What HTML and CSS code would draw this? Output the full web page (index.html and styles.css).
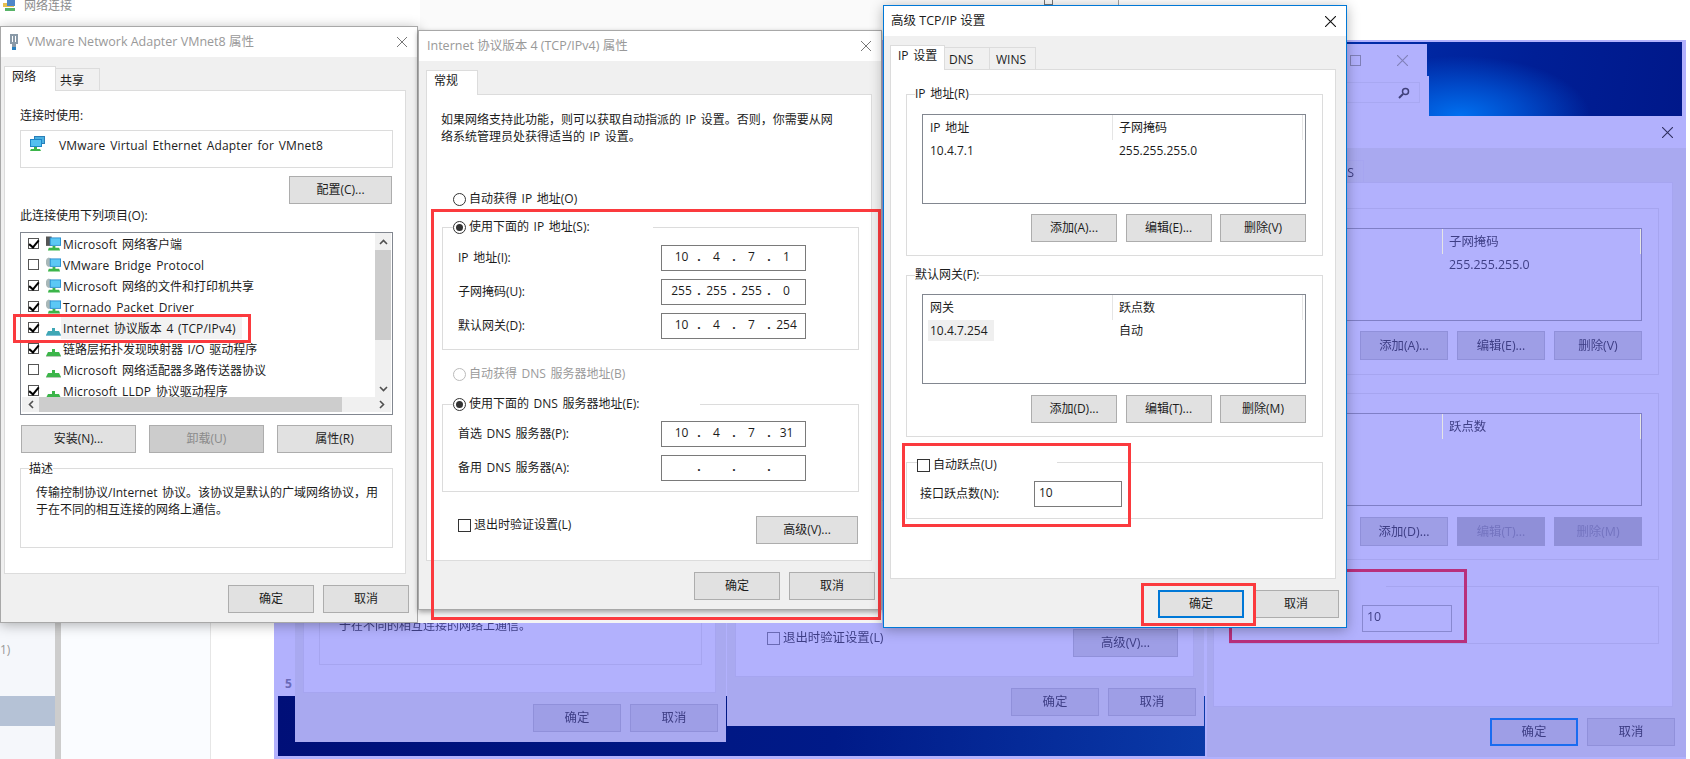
FILE: index.html
```html
<!DOCTYPE html>
<html>
    <head>
        <meta charset="utf-8">
        <title>网络连接</title>
        <link rel="stylesheet" href="styles.css">
    </head>
    <body>
        <svg class="defs" width="0" height="0">
            <symbol id="net-base" viewBox="0 0 15 16">
                <path d="M6 8h3v3h4l2 4H0l2-4h4z" fill="#3cb54a"/>
                <path d="M0 15h15v1H0z" fill="#b9c9b9"/>
            </symbol>
            <symbol id="net-proto" viewBox="0 0 15 16">
                <path d="M6 8h3v3h4l2 4H0l2-4h4z" fill="#3fa7b5"/>
                <path d="M0 15h15v1H0z" fill="#7fc0d8"/>
            </symbol>
            <symbol id="net-client" viewBox="0 0 16 16">
                <path d="M0 0h6v10H0z" fill="#555"/>
                <path d="M4 1h12v9H4z" fill="#2b8fd0"/>
                <path d="M5 2h10v7H5z" fill="#5cc8f5"/>
                <path d="M7 10h3v2h4l1 3H2l1-3h4z" fill="#3cb54a"/>
            </symbol>
            <symbol id="net-service" viewBox="0 0 16 16">
                <path d="M1 1l2-1 2 1 1 2v4l-1 2-2 1-2-1-1-2V3z" fill="#a9b8b8"/>
                <path d="M4 1h12v9H4z" fill="#2b8fd0"/>
                <path d="M5 2h10v7H5z" fill="#5cc8f5"/>
                <path d="M7 10h3v2h4l1 3H2l1-3h4z" fill="#3cb54a"/>
            </symbol>
            <symbol id="adapter" viewBox="0 0 16 16">
                <path d="M5 0h11v8H5z" fill="#2b7fb8"/>
                <path d="M6 1h9v6H6z" fill="#4bb0e0"/>
                <path d="M1 3h12v8H1z" fill="#1f86c8"/>
                <path d="M2 4h10v6H2z" fill="#53c0f0"/>
                <path d="M5 11h3v2h3l1 2H1l1-2h3z" fill="#3cb54a"/>
            </symbol>
            <symbol id="close" viewBox="0 0 10 10">
                <path d="M0 0l10 10M10 0L0 10" fill="none" stroke="currentColor" stroke-width="1"/>
            </symbol>
            <symbol id="chev-up" viewBox="0 0 9 6">
                <path d="M1 5l3.500-3.500L8 5" fill="none" stroke="#505050" stroke-width="1.600"/>
            </symbol>
            <symbol id="chev-down" viewBox="0 0 9 6">
                <path d="M1 1l3.500 3.500L8 1" fill="none" stroke="#505050" stroke-width="1.600"/>
            </symbol>
            <symbol id="chev-left" viewBox="0 0 6 9">
                <path d="M5 1L1.500 4.500 5 8" fill="none" stroke="#505050" stroke-width="1.600"/>
            </symbol>
            <symbol id="chev-right" viewBox="0 0 6 9">
                <path d="M1 1l3.500 3.500L1 8" fill="none" stroke="#505050" stroke-width="1.600"/>
            </symbol>
        </svg>

        <div class="desktop">
            <!-- explorer window behind everything -->
            <div class="explorer">
                <div class="explorer-head">
                    <svg class="explorer-icon" viewBox="0 0 14 12">
                        <path d="M0 3h4l1-2h6v6H0z" fill="#e8c050"/>
                        <path d="M4 0h8v6H4z" fill="#4f86c8"/>
                        <path d="M2 8h10v3H2z" fill="#58b368"/>
                    </svg>
                    <span>网络连接</span>
                </div>
                <div class="explorer-body">
                    <div class="explorer-nav">
                        <div class="nav-count">1)</div>
                        <div class="nav-selected"></div>
                    </div>
                    <div class="explorer-split"></div>
                    <div class="explorer-pane"></div>
                </div>
            </div>
            <div class="backwin"><span class="backwin-box"></span></div>

            <!-- washed out copy of the desktop -->
            <div class="overlay"></div>
            <div class="wall-low"></div>
            <div class="wall-high"></div>
            <div class="mini">
                <div class="mini-head">
                    <span class="mini-square"></span>
                    <svg class="mini-close"><use href="#close"/></svg>
                </div>
                <div class="mini-search">
                    <div class="mini-box">
                        <svg class="mini-glass" viewBox="0 0 12 12">
                            <circle cx="7.500" cy="4.500" r="3" fill="none" stroke="#40407a" stroke-width="1.500"/>
                            <path d="M5 7l-4 4" stroke="#40407a" stroke-width="2"/>
                        </svg>
                    </div>
                </div>
            </div>
            <span class="ghost-five">5</span>

            <div class="window ghost ghost-two">
                <div class="panel ghost-two-panel">
                    <div class="verify-row">
                        <label class="choice"><span class="check big"></span>退出时验证设置(L)</label>
                        <button class="btn btn-advanced">高级(V)...</button>
                    </div>
                </div>
                <div class="footer">
                    <button class="btn btn-ghost">确定</button>
                    <button class="btn btn-ghost">取消</button>
                </div>
            </div>

            <div class="window ghost ghost-one">
                <div class="panel ghost-one-panel">
                    <div class="ghost-desc">于在不同的相互连接的网络上通信。</div>
                </div>
                <div class="footer">
                    <button class="btn btn-ghost">确定</button>
                    <button class="btn btn-ghost">取消</button>
                </div>
            </div>

            <div class="window ghost ghost-three">
                <div class="titlebar">
                    <svg class="close"><use href="#close"/></svg>
                </div>
                <div class="tabs">
                    <span class="tab active tab-g-ip">IP 设置</span>
                    <span class="tab tab-g-dns">DNS</span>
                    <span class="tab tab-g-wins">WINS</span>
                </div>
                <div class="panel ghost-three-panel">
                    <fieldset class="group g-first">
                        <legend>IP 地址(R)</legend>
                        <div class="table">
                            <div class="table-head"><span class="cell-a">IP 地址</span><span class="cell-b">子网掩码</span></div>
                            <div class="table-row"><span class="cell-a">10.4.7.1</span><span class="cell-b">255.255.255.0</span></div>
                        </div>
                        <div class="table-actions">
                            <button class="btn btn-ghost tall">添加(A)...</button>
                            <button class="btn btn-ghost tall">编辑(E)...</button>
                            <button class="btn btn-ghost tall">删除(V)</button>
                        </div>
                    </fieldset>
                    <fieldset class="group g-second">
                        <legend>默认网关(F):</legend>
                        <div class="table">
                            <div class="table-head"><span class="cell-a">网关</span><span class="cell-b">跃点数</span></div>
                        </div>
                        <div class="table-actions">
                            <button class="btn btn-ghost tall">添加(D)...</button>
                            <button class="btn btn-ghost tall off">编辑(T)...</button>
                            <button class="btn btn-ghost tall off">删除(M)</button>
                        </div>
                    </fieldset>
                    <fieldset class="group g-third">
                        <legend></legend>
                        <div class="text-field">10</div>
                    </fieldset>
                </div>
                <div class="footer">
                    <button class="btn btn-ghost btn-default">确定</button>
                    <button class="btn btn-ghost">取消</button>
                </div>
            </div>
            <div class="mark mark-ghost"></div>

            <!-- adapter properties -->
            <div class="window dialog adapter-dialog">
                <div class="titlebar faded">
                    <svg class="plug" viewBox="0 0 10 16">
                        <path d="M1 0h8v10H7v3H3v-3H1z" fill="#8a9aa8"/>
                        <path d="M3 2h1v6H3zM6 2h1v6H6z" fill="#fff"/>
                        <path d="M3 13h4v3H3z" fill="#2a80c0"/>
                    </svg>
                    <span>VMware Network Adapter VMnet8 属性</span>
                    <svg class="close"><use href="#close"/></svg>
                </div>
                <div class="tabs">
                    <span class="tab active tab-net">网络</span>
                    <span class="tab tab-share">共享</span>
                </div>
                <div class="panel adapter-panel">
                    <div class="text-line">连接时使用:</div>
                    <div class="adapter-box">
                        <svg class="adapter-icon"><use href="#adapter"/></svg>
                        <span class="en">VMware Virtual Ethernet Adapter for VMnet8</span>
                    </div>
                    <button class="btn btn-config">配置(C)...</button>
                    <div class="text-line items-label">此连接使用下列项目(O):</div>
                    <div class="listbox">
                        <div class="rows">
                            <div class="row"><span class="check on"></span><svg class="row-icon"><use href="#net-client"/></svg><span class="row-text"><span class="en">Microsoft</span> 网络客户端</span></div>
                            <div class="row"><span class="check"></span><svg class="row-icon"><use href="#net-service"/></svg><span class="row-text"><span class="en">VMware Bridge Protocol</span></span></div>
                            <div class="row"><span class="check on"></span><svg class="row-icon"><use href="#net-service"/></svg><span class="row-text"><span class="en">Microsoft</span> 网络的文件和打印机共享</span></div>
                            <div class="row"><span class="check on"></span><svg class="row-icon"><use href="#net-service"/></svg><span class="row-text"><span class="en">Tornado Packet Driver</span></span></div>
                            <div class="row"><span class="check on"></span><svg class="row-icon"><use href="#net-proto"/></svg><span class="row-text selected"><span class="en">Internet</span> 协议版本 4 <span class="en">(TCP/IPv4)</span></span></div>
                            <div class="row"><span class="check on"></span><svg class="row-icon"><use href="#net-base"/></svg><span class="row-text">链路层拓扑发现映射器 I/O 驱动程序</span></div>
                            <div class="row"><span class="check"></span><svg class="row-icon"><use href="#net-base"/></svg><span class="row-text"><span class="en">Microsoft</span> 网络适配器多路传送器协议</span></div>
                            <div class="row"><span class="check on"></span><svg class="row-icon"><use href="#net-base"/></svg><span class="row-text"><span class="en">Microsoft LLDP</span> 协议驱动程序</span></div>
                        </div>
                        <div class="vbar">
                            <svg class="arrow-v"><use href="#chev-up"/></svg>
                            <div class="vthumb"></div>
                            <svg class="arrow-v arrow-end"><use href="#chev-down"/></svg>
                        </div>
                        <div class="hbar">
                            <svg class="arrow-h"><use href="#chev-left"/></svg>
                            <div class="hthumb"></div>
                            <svg class="arrow-h arrow-end"><use href="#chev-right"/></svg>
                        </div>
                    </div>
                    <div class="item-actions">
                        <button class="btn btn-wide">安装(N)...</button>
                        <button class="btn btn-wide disabled">卸载(U)</button>
                        <button class="btn btn-wide">属性(R)</button>
                    </div>
                    <fieldset class="group desc-group">
                        <legend>描述</legend>
                        <p class="desc-text">传输控制协议/Internet 协议。该协议是默认的广域网络协议，用<br>于在不同的相互连接的网络上通信。</p>
                    </fieldset>
                </div>
                <div class="footer">
                    <button class="btn">确定</button>
                    <button class="btn">取消</button>
                </div>
            </div>

            <!-- ipv4 properties -->
            <div class="window dialog ipv4-dialog">
                <div class="titlebar faded">
                    <span>Internet 协议版本 4 (TCP/IPv4) 属性</span>
                    <svg class="close"><use href="#close"/></svg>
                </div>
                <div class="tabs">
                    <span class="tab active tab-general">常规</span>
                </div>
                <div class="panel ipv4-panel">
                    <p class="intro">如果网络支持此功能，则可以获取自动指派的 IP 设置。否则，你需要从网<br>络系统管理员处获得适当的 IP 设置。</p>
                    <label class="choice radio-line"><span class="radio"></span>自动获得 IP 地址(O)</label>
                    <fieldset class="group ip-group">
                        <legend class="legend-ip"><span class="radio on"></span>使用下面的 IP 地址(S):</legend>
                        <div class="form-grid">
                            <span>IP 地址(I):</span>
                            <div class="ip-field"><i>10</i><b>.</b><i>4</i><b>.</b><i>7</i><b>.</b><i>1</i></div>
                            <span>子网掩码(U):</span>
                            <div class="ip-field"><i>255</i><b>.</b><i>255</i><b>.</b><i>255</i><b>.</b><i>0</i></div>
                            <span>默认网关(D):</span>
                            <div class="ip-field"><i>10</i><b>.</b><i>4</i><b>.</b><i>7</i><b>.</b><i>254</i></div>
                        </div>
                    </fieldset>
                    <label class="choice radio-line radio-off"><span class="radio"></span>自动获得 DNS 服务器地址(B)</label>
                    <fieldset class="group ip-group dns-group">
                        <legend class="legend-dns"><span class="radio on"></span>使用下面的 DNS 服务器地址(E):</legend>
                        <div class="form-grid">
                            <span>首选 DNS 服务器(P):</span>
                            <div class="ip-field"><i>10</i><b>.</b><i>4</i><b>.</b><i>7</i><b>.</b><i>31</i></div>
                            <span>备用 DNS 服务器(A):</span>
                            <div class="ip-field"><i></i><b>.</b><i></i><b>.</b><i></i><b>.</b><i></i></div>
                        </div>
                    </fieldset>
                    <div class="verify-row main-verify">
                        <label class="choice"><span class="check big"></span>退出时验证设置(L)</label>
                        <button class="btn btn-advanced-main">高级(V)...</button>
                    </div>
                </div>
                <div class="footer">
                    <button class="btn">确定</button>
                    <button class="btn">取消</button>
                </div>
            </div>
            <div class="mark mark-ipv4"></div>

            <!-- advanced settings -->
            <div class="window dialog advanced-dialog">
                <div class="titlebar dark">
                    <span>高级 TCP/IP 设置</span>
                    <svg class="close"><use href="#close"/></svg>
                </div>
                <div class="tabs">
                    <span class="tab active tab-ip">IP 设置</span>
                    <span class="tab tab-dns">DNS</span>
                    <span class="tab tab-wins">WINS</span>
                </div>
                <div class="panel advanced-panel">
                    <fieldset class="group a-group">
                        <legend>IP 地址(R)</legend>
                        <div class="table">
                            <div class="table-head"><span class="cell-a">IP 地址</span><span class="cell-b">子网掩码</span></div>
                            <div class="table-row"><span class="cell-a">10.4.7.1</span><span class="cell-b">255.255.255.0</span></div>
                        </div>
                        <div class="table-actions">
                            <button class="btn">添加(A)...</button>
                            <button class="btn">编辑(E)...</button>
                            <button class="btn">删除(V)</button>
                        </div>
                    </fieldset>
                    <fieldset class="group a-group a-second">
                        <legend>默认网关(F):</legend>
                        <div class="table">
                            <div class="table-head"><span class="cell-a">网关</span><span class="cell-b">跃点数</span></div>
                            <div class="table-row"><span class="cell-a"><span class="row-picked">10.4.7.254</span></span><span class="cell-b">自动</span></div>
                        </div>
                        <div class="table-actions">
                            <button class="btn">添加(D)...</button>
                            <button class="btn">编辑(T)...</button>
                            <button class="btn">删除(M)</button>
                        </div>
                    </fieldset>
                    <fieldset class="group metric-group">
                        <legend class="legend-metric"><span class="check big"></span>自动跃点(U)</legend>
                        <div class="metric-row">
                            <span>接口跃点数(N):</span>
                            <div class="text-field metric-field">10</div>
                        </div>
                    </fieldset>
                </div>
                <div class="footer">
                    <button class="btn btn-default">确定</button>
                    <button class="btn">取消</button>
                </div>
            </div>
            <div class="mark mark-adapter"></div>
            <div class="mark mark-metric"></div>
            <div class="mark mark-ok"></div>
        </div>
    </body>
</html>
```

FILE: styles.css
```css
* {
    box-sizing: border-box;
}
body {
    margin: 0;
    background-color: white;
}
.defs {
    display: block;
    height: 0;
}
.desktop {
    position: relative;
    width: 1690px;
    height: 759px;
    overflow: hidden;
    font-family: "Open Sans", "Noto Sans CJK SC", sans-serif;
    font-size: 12px;
    line-height: 16px;
    word-spacing: 1.500px;
    color: #1c1c1c;
}
.en {
    letter-spacing: 0.150px;
}

/* explorer behind the dialogs */
.explorer {
    position: absolute;
    left: 0;
    top: 0;
    width: 274px;
    height: 759px;
    display: flex;
    flex-direction: column;
}
.explorer-head {
    height: 26px;
    display: flex;
    gap: 7px;
    padding-left: 3px;
    line-height: 12px;
    color: #8c8c8c;
}
.explorer-icon {
    width: 14px;
    height: 12px;
}
.explorer-body {
    flex: 1;
    display: flex;
}
.explorer-nav {
    width: 55px;
    background-color: #f5f7fb;
    display: flex;
    flex-direction: column;
    justify-content: flex-end;
    padding-bottom: 33px;
}
.nav-count {
    margin-bottom: 38px;
    color: #999;
}
.nav-selected {
    height: 30px;
    background-color: #b5c2d6;
}
.explorer-split {
    width: 6px;
    background-color: #cdcdcd;
}
.explorer-pane {
    width: 150px;
    background-color: #fafcff;
    border-right: 1px solid #e6e6e6;
}
.backwin {
    position: absolute;
    left: 420px;
    top: 0;
    width: 699px;
    height: 30px;
    background-color: #fafafa;
    border-right: 1px solid #a0a0a0;
    display: flex;
    justify-content: flex-end;
    padding-right: 65px;
}
.backwin-box {
    width: 9px;
    height: 5px;
    border: 1px solid #777;
    border-top: none;
}

/* blue washed layer */
.overlay {
    position: absolute;
    left: 274px;
    top: 40px;
    width: 1412px;
    height: 719px;
    background-color: #b2b1fd;
}
.wall-low {
    position: absolute;
    left: 278px;
    top: 696px;
    width: 927px;
    height: 60px;
    background: linear-gradient(95deg, #000f78 0%, #001a88 60%, #0a3aa8 100%);
}
.wall-high {
    position: absolute;
    left: 1300px;
    top: 42px;
    width: 382px;
    height: 74px;
    background:
        radial-gradient(ellipse 130px 60px at 160px 74px, #0070f0 0%, rgba(0, 90, 220, 0.7) 50%, rgba(0, 40, 160, 0) 100%),
        linear-gradient(100deg, #0030b0 0%, #001f96 60%, #00188a 100%);
}
.mini {
    position: absolute;
    left: 1300px;
    top: 44px;
}
.mini-head {
    width: 127px;
    height: 32px;
    background-color: #b2b1fd;
    display: flex;
    align-items: center;
    padding-left: 50px;
}
.mini-square {
    width: 11px;
    height: 11px;
    border: 1px solid #8080b8;
}
.mini-close {
    width: 11px;
    height: 11px;
    margin-left: 36px;
    color: #8080b8;
}
.mini-search {
    width: 129px;
    height: 40px;
    background-color: #b2b1fd;
    padding: 6px 9px 13px 0;
}
.mini-box {
    height: 21px;
    border: 1px solid #a8a8f2;
    border-left: none;
    display: flex;
    justify-content: flex-end;
    align-items: center;
    padding-right: 9px;
}
.mini-glass {
    width: 12px;
    height: 12px;
}
.ghost-five {
    position: absolute;
    left: 285px;
    top: 676px;
    color: #6a6ab8;
    font-weight: 700;
}

/* shared window parts */
.window {
    position: absolute;
    isolation: isolate;
    display: flex;
    flex-direction: column;
    --body: #f0f0f0;
    --paper: #fff;
    --line: #dcdcdc;
    --btn: #e1e1e1;
    --btn-line: #adadad;
    --list-line: #828790;
    --field-line: #7a7a7a;
    background-color: var(--body);
}
.dialog {
    border: 1px solid #a8a8a8;
    box-shadow: 0 2px 12px rgba(0, 0, 0, 0.3);
}
.titlebar {
    height: 30px;
    background-color: var(--paper);
    display: flex;
    align-items: center;
    padding: 0 10px 0 8px;
    font-size: 12.500px;
    word-spacing: 0;
    flex: none;
}
.faded {
    color: #999;
}
.dark {
    padding-left: 7px;
}
.plug {
    width: 10px;
    height: 16px;
    margin-right: 8px;
}
.close {
    width: 10px;
    height: 10px;
    margin-left: auto;
    color: #777;
}
.dark .close {
    color: #111;
    width: 11px;
    height: 11px;
}
.tabs {
    display: flex;
    align-items: flex-end;
    margin-top: 9px;
    margin-bottom: -1px;
    position: relative;
    z-index: 1;
    flex: none;
}
.tab {
    height: 23px;
    border: 1px solid var(--line);
    border-left: none;
    line-height: 23px;
}
.tab.active {
    height: 25px;
    background-color: var(--paper);
    border-bottom: none;
    border-left: 1px solid var(--line);
    line-height: 20px;
}
.panel {
    background-color: var(--paper);
    border: 1px solid var(--line);
    flex: none;
}
.footer {
    display: flex;
    justify-content: flex-end;
    gap: 9px;
    padding: 11px 7px 0 0;
    flex: none;
}
.btn {
    width: 86px;
    height: 28px;
    padding: 0;
    font: inherit;
    color: inherit;
    word-spacing: inherit;
    background-color: var(--btn);
    border: 1px solid var(--btn-line);
}
.btn-default {
    border: 2px solid #0078d7;
}
.disabled {
    background-color: #ccc;
    color: #8a8a8a;
}
.group {
    margin: 0;
    min-width: 0;
    border: 1px solid var(--line);
}
.group legend {
    padding: 0;
}
.choice {
    display: flex;
    align-items: center;
    gap: 3px;
    height: 18px;
}
.radio {
    width: 13px;
    height: 13px;
    border: 1px solid #333;
    border-radius: 50%;
    background-color: var(--paper);
    display: grid;
    place-items: center;
    flex: none;
}
.radio.on::after {
    content: "";
    width: 7px;
    height: 7px;
    border-radius: 50%;
    background-color: #333;
}
.check {
    width: 11px;
    height: 11px;
    border: 1px solid #555;
    background-color: var(--paper);
    display: grid;
    place-items: center;
    flex: none;
}
.check.big {
    width: 13px;
    height: 13px;
    border-color: #333;
}
.check.on::after {
    content: "";
    width: 4px;
    height: 8px;
    margin-top: -2px;
    border: solid #000;
    border-width: 0 2px 2px 0;
    transform: rotate(40deg);
}
.ip-field,
.text-field {
    height: 26px;
    border: 1px solid var(--field-line);
    background-color: var(--paper);
}
.ip-field {
    display: grid;
    grid-template-columns: 25px 10px 25px 10px 25px 10px 25px;
    padding-left: 7px;
    line-height: 22px;
    text-align: center;
}
.ip-field i {
    font-style: normal;
}
.ip-field b {
    font-weight: 700;
}

/* adapter dialog */
.adapter-dialog {
    left: 0;
    top: 26px;
    width: 418px;
    height: 597px;
}
.adapter-dialog .tabs {
    margin-left: 3px;
}
.adapter-dialog .footer {
    padding-right: 8px;
}
.tab-net {
    width: 52px;
    padding-left: 7px;
}
.tab-share {
    width: 44px;
    padding-left: 4px;
}
.adapter-panel {
    height: 484px;
    margin: 0 11px 0 3px;
    padding: 16px 12px 0 15px;
    display: flex;
    flex-direction: column;
}
.text-line {
    padding-top: 1px;
    height: 16px;
}
.adapter-box {
    height: 38px;
    margin-top: 7px;
    border: 1px solid var(--line);
    display: flex;
    gap: 14px;
    padding: 5px 0 0 8px;
    flex: none;
}
.adapter-icon {
    width: 16px;
    height: 16px;
    flex: none;
}
.adapter-box span {
    line-height: 20px;
}
.btn-config {
    width: 103px;
    margin: 8px 1px 0 auto;
    flex: none;
}
.items-label {
    margin-top: 3px;
}
.listbox {
    height: 183px;
    margin-top: 9px;
    border: 1px solid var(--list-line);
    padding: 0 1px 2px;
    display: grid;
    grid-template-columns: 1fr 16px;
    grid-template-rows: 164px 15px;
    flex: none;
}
.rows {
    overflow: hidden;
}
.row {
    height: 21px;
    display: flex;
    align-items: center;
    padding-left: 6px;
    white-space: nowrap;
}
.row-icon {
    width: 15px;
    height: 16px;
    margin-left: 7px;
    flex: none;
}
.row-text {
    padding: 1px 6px 0 2px;
    line-height: 21px;
}
.row-text.selected {
    background-color: #f2f2f2;
    padding-right: 6px;
}
.vbar {
    background-color: #f0f0f0;
    display: flex;
    flex-direction: column;
    align-items: center;
}
.arrow-v {
    width: 9px;
    height: 6px;
    margin: 6px 0 5px;
    flex: none;
}
.vthumb {
    width: 100%;
    height: 90px;
    background-color: #cdcdcd;
}
.arrow-end {
    margin-top: auto;
}
.hbar {
    grid-column: 1 / span 2;
    background-color: #f0f0f0;
    display: flex;
    align-items: center;
}
.arrow-h {
    width: 6px;
    height: 9px;
    margin: 0 6px;
    flex: none;
}
.hbar .arrow-end {
    margin: 0 6px 0 auto;
}
.hthumb {
    width: 303px;
    height: 100%;
    margin-left: -1px;
    background-color: #cdcdcd;
}
.item-actions {
    display: flex;
    gap: 13px;
    margin: 10px 1px 0;
    flex: none;
}
.btn-wide {
    width: 115px;
}
.desc-group {
    height: 88px;
    margin-top: 7px;
    padding: 7px 0 0 15px;
    flex: none;
}
.desc-group legend {
    margin-left: -7px;
    padding-top: 1px;
}
.desc-text {
    margin: 0;
    line-height: 17px;
    white-space: nowrap;
}

/* ipv4 dialog */
.ipv4-dialog {
    left: 418px;
    top: 30px;
    width: 464px;
    height: 580px;
    box-shadow: 0 2px 5px rgba(0, 0, 0, 0.35), 0 13px 0 #f4f4f4;
}
.ipv4-dialog .tabs {
    margin-left: 7px;
}
.ipv4-dialog .footer {
    padding-right: 6px;
}
.tab-general {
    width: 52px;
    padding-left: 7px;
}
.ipv4-panel {
    height: 467px;
    margin: 0 9px 0 7px;
    padding: 16px 12px 0 14px;
}
.intro {
    margin: 0;
    line-height: 17px;
    white-space: nowrap;
}
.radio-line {
    margin-top: 45px;
    padding-left: 12px;
}
.radio-off {
    margin-top: 15px;
    color: #9a9a9a;
}
.radio-off .radio {
    border-color: #bbb;
}
.ip-group {
    margin: 11px 0 0 1px;
    padding: 10px 15px 10px;
}
.dns-group {
    margin-top: 13px;
    padding-top: 9px;
}
.ip-group legend {
    margin-left: -5px;
    display: flex;
    align-items: center;
    gap: 3px;
    height: 16px;
}
.legend-ip {
    width: 200px;
}
.legend-dns {
    width: 247px;
}
.form-grid {
    display: grid;
    grid-template-columns: 203px 145px;
    grid-auto-rows: 26px;
    row-gap: 8px;
    align-items: center;
}
.verify-row {
    display: flex;
    justify-content: space-between;
}
.main-verify {
    margin-top: 24px;
    padding: 0 1px 0 17px;
}
.btn-advanced-main {
    width: 102px;
}

/* advanced dialog */
.advanced-dialog {
    left: 883px;
    top: 5px;
    width: 464px;
    height: 623px;
    border-color: #0078d7;
}
.advanced-dialog .tabs {
    margin-left: 6px;
}
.tab-ip {
    width: 55px;
    padding-left: 7px;
}
.tab-dns {
    width: 45px;
    padding-left: 4px;
}
.tab-wins {
    width: 46px;
    padding-left: 6px;
}
.advanced-panel {
    height: 510px;
    margin: 0 10px 0 6px;
    padding: 16px 12px 0 15px;
}
.a-group {
    padding: 12px 16px 13px 15px;
}
.a-group legend {
    margin-left: -7px;
}
.a-second {
    margin-top: 11px;
    padding-top: 11px;
}
.table {
    height: 90px;
    border: 1px solid var(--list-line);
    background-color: var(--paper);
}
.table-head {
    display: flex;
    height: 25px;
    line-height: 25px;
}
.table-row {
    display: flex;
    height: 21px;
    line-height: 21px;
}
.cell-a {
    width: 190px;
    padding-left: 7px;
}
.cell-b {
    width: 190px;
    padding-left: 6px;
}
.table-head .cell-a,
.table-head .cell-b {
    border-right: 1px solid #e5e5e5;
}
.row-picked {
    display: inline-block;
    margin-left: -2px;
    padding: 0 6px 0 2px;
    background-color: #efefef;
}
.table-actions {
    display: flex;
    justify-content: flex-end;
    gap: 8.500px;
    margin-top: 10px;
}
.a-second .table-actions {
    margin-top: 11px;
}
.metric-group {
    margin-top: 14px;
    padding: 8px 0 11px 13px;
}
.group .legend-metric {
    width: 140px;
    margin-left: -3px;
    padding: 6px 0 0 0;
    display: flex;
    align-items: center;
    gap: 3px;
}
.metric-row {
    display: flex;
    align-items: center;
}
.metric-row span {
    width: 114px;
}
.text-field {
    line-height: 22px;
    padding-left: 4px;
}
.metric-field {
    width: 88px;
}

/* annotations */
.mark {
    position: absolute;
    border: 3px solid #fb3a3e;
}
.mark-adapter {
    left: 13px;
    top: 314px;
    width: 238px;
    height: 29px;
}
.mark-ipv4 {
    left: 431px;
    top: 209px;
    width: 450px;
    height: 411px;
}
.mark-metric {
    left: 902px;
    top: 443px;
    width: 229px;
    height: 84px;
}
.mark-ok {
    left: 1141px;
    top: 583px;
    width: 115px;
    height: 43px;
}
.mark-ghost {
    left: 1229px;
    top: 569px;
    width: 238px;
    height: 74px;
    border-color: #b8307c;
}

/* washed copies, same parts in other colours */
.ghost {
    --body: #a9a9f0;
    --paper: #b2b1fd;
    --line: #a6a5f0;
    --btn: #9e9ee6;
    --btn-line: #9090da;
    --list-line: #7f7fc6;
    --field-line: #8888d0;
    color: #3e3e85;
    font-size: 12.400px;
    word-spacing: 0;
    filter: blur(0.4px);
}
.ghost .close {
    color: #303060;
    width: 11px;
    height: 11px;
    margin-right: 3px;
}
.btn-ghost {
    width: 88px;
}
.btn-ghost.tall {
    height: 29px;
}
.btn-ghost.off {
    background-color: #8f8fd8;
    border-color: #8f8fd8;
    color: #7474c0;
}
.ghost .btn-default {
    border: 2px solid #1a6cf0;
}
.ghost .radio,
.ghost .check {
    background-color: transparent;
}
.ghost .check {
    border-color: #6a6ab4;
}
.ghost-one {
    left: 295px;
    top: 500px;
    width: 431px;
    height: 242px;
}
.ghost-one .footer {
    padding: 11px 8px 10px 0;
}
.ghost-two .footer {
    padding-bottom: 10px;
}
.ghost-one-panel {
    flex: 1;
    margin: 0 10px 0 8px;
    padding: 100px 13px 27px 15px;
    display: flex;
}
.ghost-desc {
    flex: 1;
    padding: 16px 0 0 19px;
    border: 1px solid var(--line);
    font-size: 12px;
    white-space: nowrap;
}
.ghost-two {
    left: 727px;
    top: 500px;
    width: 477px;
    height: 226px;
}
.ghost-two-panel {
    flex: 1;
    margin: 0 10px 0 8px;
    padding: 128px 15px 0 31px;
}
.ghost-two .footer {
    padding-right: 8px;
}
.btn-advanced {
    width: 105px;
}
.ghost-three {
    left: 1207px;
    top: 116px;
    width: 479px;
    height: 641px;
}
.ghost-three .titlebar {
    height: 32px;
    padding-right: 10px;
}
.ghost-three .tabs {
    margin: 11px 0 -1px 6px;
}
.tab-g-ip {
    width: 57px;
}
.tab-g-dns {
    width: 47px;
}
.tab-g-wins {
    width: 47px;
    padding-left: 6px;
}
.ghost-three .tab {
    height: 23px;
    text-align: left;
}
.ghost-three .tab.active {
    height: 24px;
}
.ghost-three-panel {
    height: 525px;
    margin: 0 13px 0 6px;
    padding: 17px 0 0 15px;
}
.ghost-three .group {
    width: 430px;
    padding: 12px 16px 14px 15px;
}
.ghost-three .group legend {
    margin-left: -7px;
}
.ghost-three .table {
    height: 93px;
}
.ghost-three .cell-a {
    width: 197px;
}
.ghost-three .cell-b {
    width: 198px;
}
.ghost-three .table-actions {
    gap: 9px;
}
.ghost-three .g-second {
    margin-top: 10px;
    padding-bottom: 13px;
}
.ghost-three .g-second .table-actions {
    margin-top: 11px;
}
.ghost-three .g-third {
    margin-top: 18px;
    padding: 11px 0 11px 132px;
}
.ghost-three .g-third legend {
    width: 146px;
    height: 16px;
    margin-left: -122px;
}
.ghost-three .text-field {
    width: 90px;
    height: 27px;
}
.ghost-three .footer {
    padding-right: 11px;
}
```
